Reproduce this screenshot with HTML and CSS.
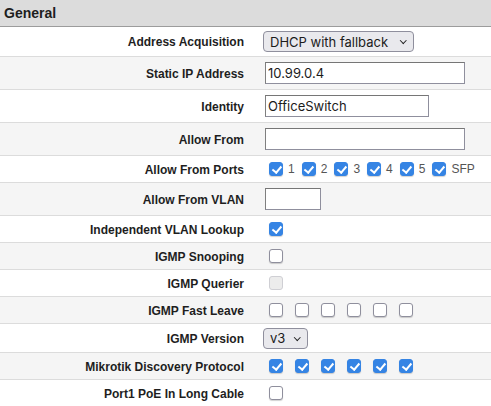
FILE: index.html
```html
<!DOCTYPE html>
<html>
<head>
<meta charset="utf-8">
<link rel="stylesheet" href="styles.css">
</head>
<body>
<div class="panel">
  <div class="head">General</div>

  <div class="row r-sel first">
    <div class="lbl">Address Acquisition</div>
    <div class="val"><span class="selwrap wide"><select class="sel"><option>DHCP with fallback</option></select></span></div>
  </div>

  <div class="row r-in alt">
    <div class="lbl">Static IP Address</div>
    <div class="val"><input class="txt w200" type="text" value="10.99.0.4"></div>
  </div>

  <div class="row r-in">
    <div class="lbl">Identity</div>
    <div class="val"><input class="txt w164" type="text" value="OfficeSwitch"></div>
  </div>

  <div class="row r-in alt">
    <div class="lbl">Allow From</div>
    <div class="val"><input class="txt w200" type="text" value=""></div>
  </div>

  <div class="row r-cb">
    <div class="lbl">Allow From Ports</div>
    <div class="val cbs">
      <label class="cbl"><input type="checkbox" class="cb" checked><span>1</span></label>
      <label class="cbl"><input type="checkbox" class="cb" checked><span>2</span></label>
      <label class="cbl"><input type="checkbox" class="cb" checked><span>3</span></label>
      <label class="cbl"><input type="checkbox" class="cb" checked><span>4</span></label>
      <label class="cbl"><input type="checkbox" class="cb" checked><span>5</span></label>
      <label class="cbl"><input type="checkbox" class="cb" checked><span>SFP</span></label>
    </div>
  </div>

  <div class="row r-in alt">
    <div class="lbl">Allow From VLAN</div>
    <div class="val"><input class="txt w56" type="text" value=""></div>
  </div>

  <div class="row r-cb">
    <div class="lbl">Independent VLAN Lookup</div>
    <div class="val cbs"><input type="checkbox" class="cb" checked></div>
  </div>

  <div class="row r-cb alt">
    <div class="lbl">IGMP Snooping</div>
    <div class="val cbs"><input type="checkbox" class="cb"></div>
  </div>

  <div class="row r-cb">
    <div class="lbl">IGMP Querier</div>
    <div class="val cbs"><input type="checkbox" class="cb" disabled></div>
  </div>

  <div class="row r-cb alt">
    <div class="lbl">IGMP Fast Leave</div>
    <div class="val cbs">
      <input type="checkbox" class="cb">
      <input type="checkbox" class="cb">
      <input type="checkbox" class="cb">
      <input type="checkbox" class="cb">
      <input type="checkbox" class="cb">
      <input type="checkbox" class="cb">
    </div>
  </div>

  <div class="row r-sel">
    <div class="lbl">IGMP Version</div>
    <div class="val"><span class="selwrap narrow"><select class="sel"><option>v3</option></select></span></div>
  </div>

  <div class="row r-cb alt">
    <div class="lbl">Mikrotik Discovery Protocol</div>
    <div class="val cbs">
      <input type="checkbox" class="cb" checked>
      <input type="checkbox" class="cb" checked>
      <input type="checkbox" class="cb" checked>
      <input type="checkbox" class="cb" checked>
      <input type="checkbox" class="cb" checked>
      <input type="checkbox" class="cb" checked>
    </div>
  </div>

  <div class="row r-cb">
    <div class="lbl">Port1 PoE In Long Cable</div>
    <div class="val cbs"><input type="checkbox" class="cb"></div>
  </div>
</div>
</body>
</html>
```

FILE: styles.css
```css
html, body {
  margin: 0;
  padding: 0;
  background: #fff;
}
body {
  font-family: "Liberation Sans", Arial, sans-serif;
  color: #1e1e1e;
  width: 491px;
  overflow: hidden;
}
.panel {
  display: flex;
  flex-direction: column;
}
.head {
  box-sizing: border-box;
  height: 27px;
  background: #dcdcdc;
  border-bottom: 1px solid #9c9c9c;
  font-weight: bold;
  font-size: 14px;
  line-height: 27px;
  padding-left: 4px;
}
.row {
  display: grid;
  grid-template-columns: 244px 1fr;
  align-items: center;
  border-bottom: 1px solid #dcdcdc;
  background: #fff;
}
.row.alt {
  background: #f5f5f5;
}
.r-sel { height: 28px; }
.r-sel.first { height: 29px; }
.r-in { height: 32px; }
.r-cb { height: 26px; }
.lbl {
  text-align: right;
  font-weight: bold;
  font-size: 12px;
  padding-top: 1px;
}
.val {
  padding-left: 19px;
  display: flex;
  align-items: center;
}
.txt {
  box-sizing: border-box;
  height: 22px;
  margin: 0 0 0 2px;
  border: 1px solid #8f8f9d;
  border-top-color: #767676;
  border-left-color: #7f7f7f;
  background: #fff;
  font-family: Inter, "Noto Sans", sans-serif;
  font-size: 13px;
  color: #1b1b1b;
  padding: 0 2px;
  outline: none;
}
.w200 { width: 200px; }
.w164 { width: 164px; }
.w56 { width: 56px; }

.selwrap {
  position: relative;
  display: inline-block;
}
.selwrap::after {
  content: "";
  position: absolute;
  right: 9px;
  top: 7px;
  width: 3.5px;
  height: 3.5px;
  border-right: 1.3px solid #222;
  border-bottom: 1.3px solid #222;
  transform: rotate(45deg);
  pointer-events: none;
}
.sel {
  -webkit-appearance: none;
  appearance: none;
  box-sizing: border-box;
  height: 21px;
  margin: 0;
  border: 1px solid #8f8f9d;
  border-radius: 4px;
  background: #e9e9ed;
  font-family: Inter, "Noto Sans", sans-serif;
  font-size: 13px;
  color: #1b1b1b;
  padding: 0 0 0 6px;
}
.wide .sel { width: 151px; }
.narrow .sel { width: 45px; }

.cb {
  -webkit-appearance: none;
  appearance: none;
  position: relative;
  box-sizing: border-box;
  width: 14px;
  height: 14px;
  margin: 0 12px 0 6px;
  border: 1px solid #8f8f9d;
  border-radius: 3px;
  background: #fff;
  box-shadow: 0 1px 1px rgba(0,0,0,0.18);
  flex: none;
}
.cb + .cb { margin-left: 0; }
.cb:checked {
  background: #3584e4;
  border-color: #3584e4;
}
.cb:checked::after {
  content: "";
  position: absolute;
  left: 3.5px;
  top: 1px;
  width: 3.5px;
  height: 7px;
  border-right: 2px solid #fff;
  border-bottom: 2px solid #fff;
  transform: rotate(40deg);
}
.cb:disabled {
  background: #ececec;
  border-color: #cfcfd4;
  box-shadow: none;
}
.cbl {
  display: flex;
  align-items: center;
  font-size: 12px;
  color: #555;
}
.cbl .cb { margin: 0 5px 0 0; }
.cbl:first-child .cb { margin-left: 6px; }
.cbl span { margin-right: 7px; }
```
